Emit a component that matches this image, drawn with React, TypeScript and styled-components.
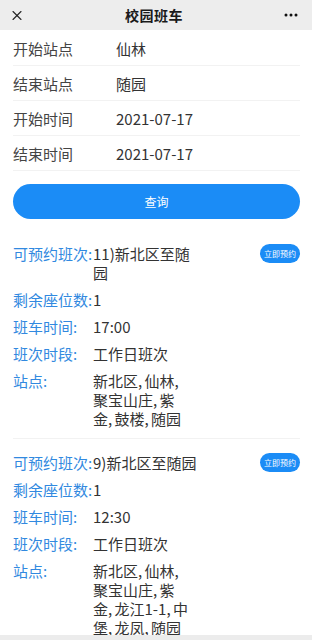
import React from 'react'
import styled, { createGlobalStyle } from 'styled-components'
import { X } from 'lucide-react'

const GlobalStyle = createGlobalStyle`
  html, body {
    margin: 0;
    padding: 0;
    background: #fff;
  }
  body {
    font-family: "Noto Sans CJK SC", "Noto Sans", sans-serif;
    color: #333;
    -webkit-font-smoothing: antialiased;
  }
`

const Page = styled.div`
  width: 312px;
  min-height: 640px;
  background: #fff;
`

const TopBar = styled.div`
  height: 30px;
  background: #ededed;
  display: flex;
  align-items: center;
  justify-content: space-between;
  padding: 0 13px 0 9px;
`

const TopTitle = styled.div`
  font-size: 14px;
  font-weight: 700;
  color: #1a1a1a;
  letter-spacing: 0.5px;
`

const TopIcon = styled.div`
  width: 16px;
  display: flex;
  align-items: center;
  justify-content: center;
  color: #222;
`

const Form = styled.div`
  padding: 1px 12px 0 13px;
`

const FormRow = styled.div`
  height: 34px;
  display: flex;
  align-items: center;
  border-bottom: 1px solid #f2f2f2;
  font-size: 15px;
`

const FormLabel = styled.div`
  width: 103px;
  color: #444;
`

const FormValue = styled.div`
  color: #333;
`

const QueryButton = styled.button`
  display: block;
  width: 287px;
  height: 35px;
  margin: 13px 12px 11px 13px;
  border: none;
  border-radius: 18px;
  background: #1b8cf6;
  color: #fff;
  font-family: inherit;
  font-size: 12px;
`

const List = styled.div`
  padding: 0 12px 0 13px;
`

const Card = styled.div`
  position: relative;
  padding: 14px 0 10px;
  border-bottom: 1px solid #f2f2f2;
`

const InfoRow = styled.div`
  display: flex;
  align-items: flex-start;
  font-size: 15px;
  line-height: 19px;
  & + & {
    margin-top: 8px;
  }
`

const InfoLabel = styled.div`
  width: 80px;
  flex-shrink: 0;
  white-space: nowrap;
  color: #3189e0;
`

// the stop list wraps a little narrower than the route name
const InfoValue = styled.div<{ $stops?: boolean }>`
  width: ${(p) => (p.$stops ? '96.2px' : '104px')};
  color: #333;
  word-spacing: ${(p) => (p.$stops ? '-1px' : '0')};
`

const BookButton = styled.button`
  position: absolute;
  top: 14px;
  right: 0;
  height: 19px;
  padding: 0 4px;
  border: none;
  border-radius: 10px;
  background: #1b8cf6;
  color: #fff;
  font-family: inherit;
  font-size: 8px;
  line-height: 19px;
`

const BottomBar = styled.div`
  position: fixed;
  left: 0;
  bottom: 0;
  width: 312px;
  height: 5px;
  background: #ececec;
`

const Dots = () => (
  <svg width="14" height="4" viewBox="0 0 14 4">
    <circle cx="2" cy="2" r="1.5" fill="#111" />
    <circle cx="7" cy="2" r="1.5" fill="#111" />
    <circle cx="12" cy="2" r="1.5" fill="#111" />
  </svg>
)

interface Trip {
  name: string
  seats: number
  time: string
  period: string
  stops: string
}

const query = [
  { label: '开始站点', value: '仙林' },
  { label: '结束站点', value: '随园' },
  { label: '开始时间', value: '2021-07-17' },
  { label: '结束时间', value: '2021-07-17' },
]

const trips: Trip[] = [
  {
    name: '11)新北区至随园',
    seats: 1,
    time: '17:00',
    period: '工作日班次',
    stops: '新北区, 仙林, 聚宝山庄, 紫金, 鼓楼, 随园',
  },
  {
    name: '9)新北区至随园',
    seats: 1,
    time: '12:30',
    period: '工作日班次',
    stops: '新北区, 仙林, 聚宝山庄, 紫金, 龙江1-1, 中堡, 龙凤, 随园',
  },
]

const TripCard = ({ trip }: { trip: Trip }) => (
  <Card>
    <InfoRow>
      <InfoLabel>可预约班次:</InfoLabel>
      <InfoValue>{trip.name}</InfoValue>
    </InfoRow>
    <InfoRow>
      <InfoLabel>剩余座位数:</InfoLabel>
      <InfoValue>{trip.seats}</InfoValue>
    </InfoRow>
    <InfoRow>
      <InfoLabel>班车时间:</InfoLabel>
      <InfoValue>{trip.time}</InfoValue>
    </InfoRow>
    <InfoRow>
      <InfoLabel>班次时段:</InfoLabel>
      <InfoValue>{trip.period}</InfoValue>
    </InfoRow>
    <InfoRow>
      <InfoLabel>站点:</InfoLabel>
      <InfoValue $stops>{trip.stops}</InfoValue>
    </InfoRow>
    <BookButton>立即预约</BookButton>
  </Card>
)

export default function App() {
  return (
    <Page>
      <GlobalStyle />
      <TopBar>
        <TopIcon>
          <X size={17} strokeWidth={1.6} />
        </TopIcon>
        <TopTitle>校园班车</TopTitle>
        <TopIcon>
          <Dots />
        </TopIcon>
      </TopBar>
      <Form>
        {query.map((row) => (
          <FormRow key={row.label}>
            <FormLabel>{row.label}</FormLabel>
            <FormValue>{row.value}</FormValue>
          </FormRow>
        ))}
      </Form>
      <QueryButton>查询</QueryButton>
      <List>
        {trips.map((trip) => (
          <TripCard key={trip.name} trip={trip} />
        ))}
      </List>
      <BottomBar />
    </Page>
  )
}
